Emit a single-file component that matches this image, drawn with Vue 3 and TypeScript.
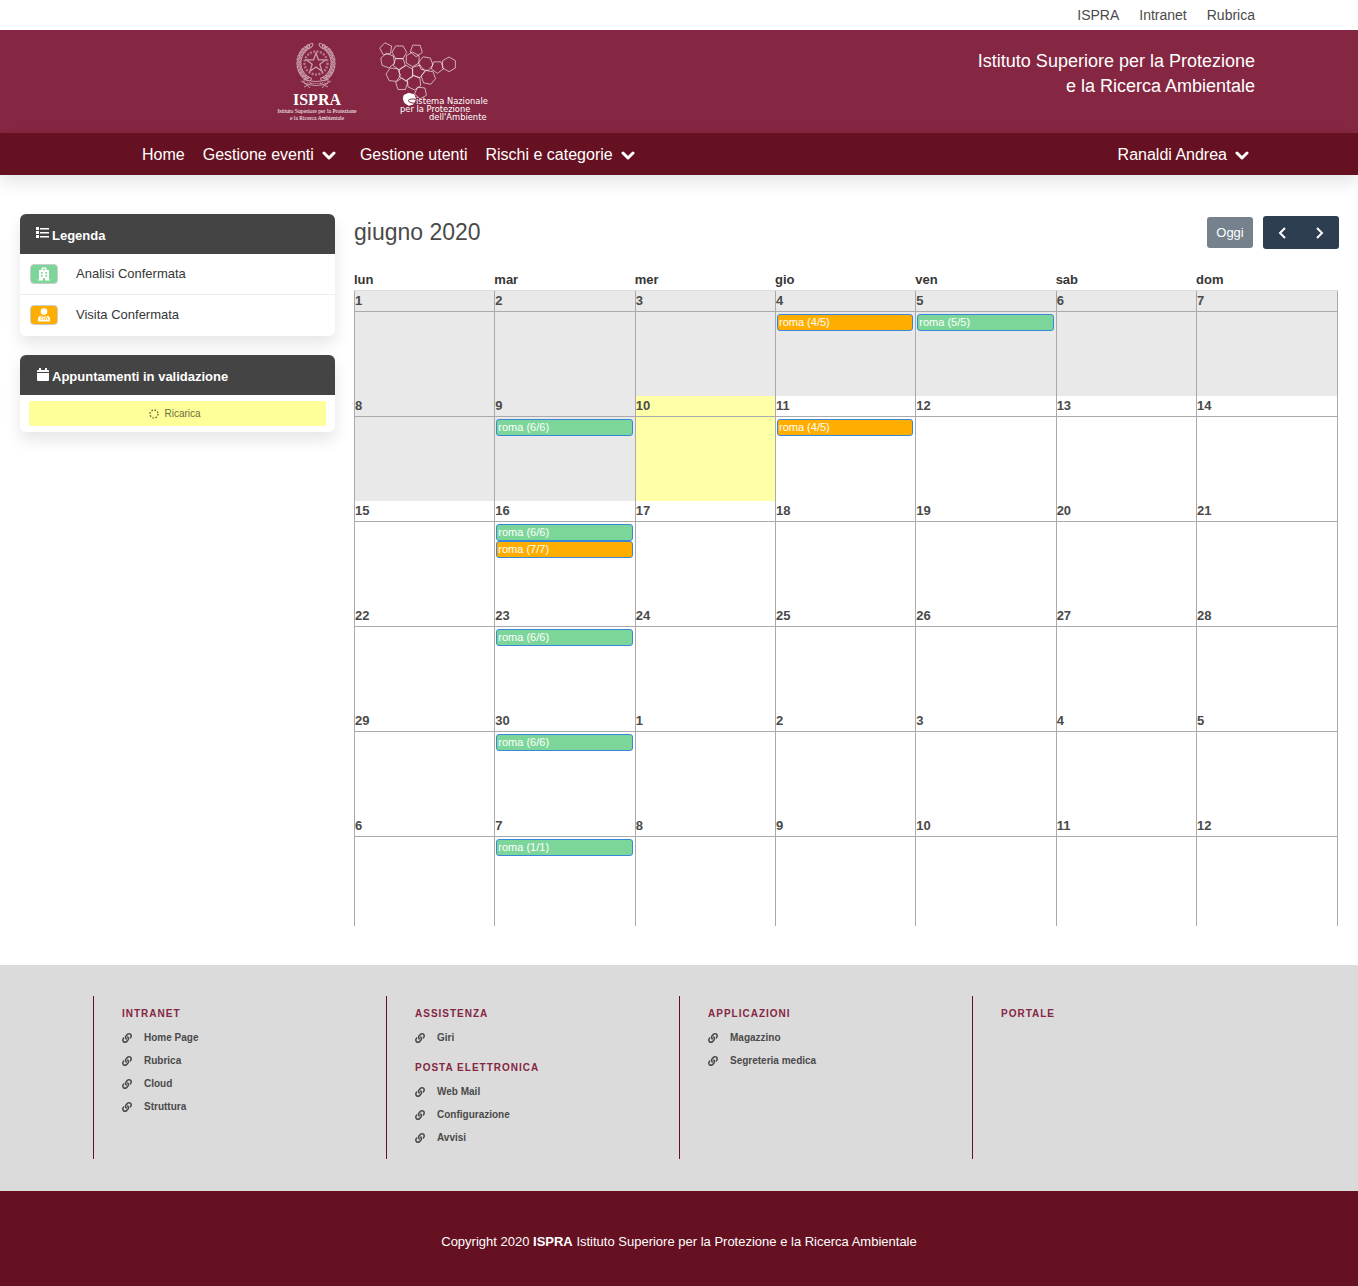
<script setup lang="ts">
interface Evento { label: string; kind: 'analisi' | 'visita' }
interface Giorno { num: number; stato: string; eventi: Evento[] }
interface Menu { titolo: string; voci: string[] }

const giorniSettimana = ['lun', 'mar', 'mer', 'gio', 'ven', 'sab', 'dom']

const eventi: Record<number, Evento[]> = {
  3: [{ label: 'roma (4/5)', kind: 'visita' }],
  4: [{ label: 'roma (5/5)', kind: 'analisi' }],
  8: [{ label: 'roma (6/6)', kind: 'analisi' }],
  10: [{ label: 'roma (4/5)', kind: 'visita' }],
  15: [{ label: 'roma (6/6)', kind: 'analisi' }, { label: 'roma (7/7)', kind: 'visita' }],
  22: [{ label: 'roma (6/6)', kind: 'analisi' }],
  29: [{ label: 'roma (6/6)', kind: 'analisi' }],
  36: [{ label: 'roma (1/1)', kind: 'analisi' }],
}

const settimane: Giorno[][] = Array.from({ length: 6 }, (_, s) =>
  Array.from({ length: 7 }, (_, g) => {
    const i = s * 7 + g
    return {
      num: i < 30 ? i + 1 : i - 29,
      stato: i < 9 ? 'passato' : i === 9 ? 'oggi' : '',
      eventi: eventi[i] ?? [],
    }
  }),
)

const colonne: Menu[][] = [
  [{ titolo: 'Intranet', voci: ['Home Page', 'Rubrica', 'Cloud', 'Struttura'] }],
  [
    { titolo: 'Assistenza', voci: ['Giri'] },
    { titolo: 'Posta elettronica', voci: ['Web Mail', 'Configurazione', 'Avvisi'] },
  ],
  [{ titolo: 'Applicazioni', voci: ['Magazzino', 'Segreteria medica'] }],
  [{ titolo: 'Portale', voci: [] }],
]

function poligono(cx: number, cy: number, r: number, lati: number, gradi: number): string {
  return Array.from({ length: lati }, (_, i) => {
    const a = ((gradi + (360 / lati) * i) * Math.PI) / 180
    return `${(cx + r * Math.cos(a)).toFixed(1)},${(cy + r * Math.sin(a)).toFixed(1)}`
  }).join(' ')
}

// centre x, centre y, radius, sides, rotation
const celle: number[][] = [
  [378, 57, 19, 5, -100], [418, 67, 22, 6, 0], [469, 61, 19, 5, 20], [383, 92, 22, 6, 20],
  [418, 101, 19, 5, 90], [458, 88, 22, 6, 30], [497, 101, 22, 6, 10], [532, 111, 19, 5, 90],
  [567, 103, 22, 6, 30], [400, 134, 22, 6, 5], [438, 129, 23, 6, 30], [474, 124, 20, 5, 0],
  [505, 142, 22, 6, 10], [425, 163, 19, 5, -90], [462, 158, 22, 6, 25], [482, 188, 19, 5, -120],
]
const molecole = celle.map(([x, y, r, n, g]) => poligono(x, y, r, n, g))

const foglie = Array.from({ length: 13 }, (_, i) => {
  const a = ((118 + i * 11) * Math.PI) / 180
  return { x: 20 + 17 * Math.cos(a), y: 22 + 18 * Math.sin(a), g: 118 + i * 11 + 65 }
})
const stella = Array.from({ length: 10 }, (_, i) => {
  const a = ((i * 36 - 90) * Math.PI) / 180
  const r = i % 2 ? 4 : 10
  return `${(20 + r * Math.cos(a)).toFixed(1)},${(22 + r * Math.sin(a)).toFixed(1)}`
}).join(' ')

const catena = 'M326.612 185.391c59.747 59.809 58.927 155.698.36 214.59-.11.12-.24.25-.36.37l-67.2 67.2c-59.27 59.27-155.699 59.262-214.96 0-59.27-59.26-59.27-155.7 0-214.96l37.106-37.106c9.84-9.84 26.786-3.3 27.294 10.606.648 17.722 3.826 35.527 9.69 52.721 1.986 5.822.567 12.262-3.783 16.612l-13.087 13.087c-28.026 28.026-28.905 73.66-1.155 101.96 28.024 28.579 74.086 28.749 102.325.51l67.2-67.19c28.191-28.191 28.073-73.757 0-101.83-3.701-3.694-7.429-6.564-10.341-8.569a16.037 16.037 0 0 1-6.947-12.606c-.396-10.567 3.348-21.456 11.698-29.806l21.054-21.055c5.521-5.521 14.182-6.199 20.584-1.731a152.482 152.482 0 0 1 20.522 17.197zM467.547 44.449c-59.261-59.262-155.69-59.27-214.96 0l-67.2 67.2c-.12.12-.25.25-.36.37-58.566 58.892-59.387 154.781.36 214.59a152.454 152.454 0 0 0 20.521 17.196c6.402 4.468 15.064 3.789 20.584-1.731l21.054-21.055c8.35-8.35 12.094-19.239 11.698-29.806a16.037 16.037 0 0 0-6.947-12.606c-2.912-2.005-6.64-4.875-10.341-8.569-28.073-28.073-28.191-73.639 0-101.83l67.2-67.19c28.239-28.239 74.3-28.069 102.325.51 27.75 28.3 26.872 73.934-1.155 101.96l-13.087 13.087c-4.35 4.35-5.769 10.79-3.783 16.612 5.864 17.194 9.042 34.999 9.69 52.721.509 13.906 17.454 20.446 27.294 10.606l37.106-37.106c59.271-59.259 59.271-155.699.001-214.959z'
</script>

<template>
  <div class="page">
    <nav class="top container">
      <a href="#">ISPRA</a>
      <a href="#">Intranet</a>
      <a href="#">Rubrica</a>
    </nav>

    <header class="hero">
      <div class="container hero-in">
        <div class="logos">
          <svg class="logo-ispra" width="80" height="84" viewBox="0 0 240 252" role="img" aria-label="ISPRA">
            <g transform="translate(57 0) scale(3)" fill="none" stroke="#fff" stroke-width="1" opacity=".55">
              <g v-for="lato in [1, -1]" :key="lato" :transform="lato === 1 ? 'translate(0 0)' : 'translate(40 0) scale(-1 1)'">
                <ellipse v-for="(f, i) in foglie" :key="i" :cx="f.x" :cy="f.y" rx="3.4" ry="1.6" :transform="`rotate(${f.g} ${f.x} ${f.y})`" />
                <path d="M5 40c4 2 6 4 9 7M8 46l8-4" />
              </g>
              <circle cx="20" cy="22" r="11.5" stroke-dasharray="2 1.4" stroke-width="2.4" opacity=".7" />
              <polygon :points="stella" stroke-width="1.3" />
              <path d="M8 38q12 5 24 0v4q-12 5-24 0z" />
              <path d="M11 41q9 3 18 0" stroke-dasharray="1.5 1" />
            </g>
            <text class="l-name" x="120" y="191" text-anchor="middle">ISPRA</text>
            <text class="l-sub" x="120" y="217" text-anchor="middle">Istituto Superiore per la Protezione</text>
            <text class="l-sub" x="120" y="238" text-anchor="middle">e la Ricerca Ambientale</text>
          </svg>
          <svg class="logo-snpa" width="130" height="84" viewBox="0 0 390 252" role="img" aria-label="Sistema Nazionale per la Protezione dell'Ambiente">
            <g transform="translate(-351 -33)">
              <polygon v-for="(p, i) in molecole" :key="i" :points="p" fill="none" stroke="#fff" stroke-width="2.6" opacity=".72" />
              <path d="M432 196l14-6 16 4 5 14-7 14-14 4-12-8-4-12z" fill="#fff" stroke="#fff" stroke-width="3" />
              <path d="M468 208q-18-3-23 3 0 8 23 9" fill="none" stroke="#852642" stroke-width="3" />
            </g>
            <text class="l-snpa" x="117" y="190">istema Nazionale</text>
            <text class="l-snpa" x="69" y="214">per la Protezione</text>
            <text class="l-snpa" x="156" y="238">dell'Ambiente</text>
          </svg>
        </div>
        <p class="hero-text">Istituto Superiore per la Protezione<br />e la Ricerca Ambientale</p>
      </div>
    </header>

    <nav class="bar">
      <div class="container bar-in">
        <a href="#">Home</a>
        <a href="#" class="drop">Gestione eventi<svg width="14" height="9" viewBox="0 0 14 9"><path d="M2 2l5 5 5-5" /></svg></a>
        <a href="#" class="after">Gestione utenti</a>
        <a href="#" class="drop">Rischi e categorie<svg width="14" height="9" viewBox="0 0 14 9"><path d="M2 2l5 5 5-5" /></svg></a>
        <a href="#" class="drop user">Ranaldi Andrea<svg width="14" height="9" viewBox="0 0 14 9"><path d="M2 2l5 5 5-5" /></svg></a>
      </div>
    </nav>

    <main class="main">
      <aside>
        <section class="card">
          <h2>
            <svg width="14" height="13" viewBox="0 0 14 13" fill="#fff"><path d="M0 0h3v3H0zM0 4h3v3H0zM0 8h3v3H0zM4 1h9v1.500H4zM4 5h9v1.500H4zM4 9h9v1.500H4z" /></svg>Legenda
          </h2>
          <ul class="legend">
            <li>
              <span class="tag analisi"><svg width="14" height="14" viewBox="0 0 14 14"><path fill="#fff" fill-rule="evenodd" d="M1 13.500V12.500H2V3.500q0-.5.5-.5H4.500V1q0-.5.5-.5h4q.5 0 .5.500v2h2q.5 0 .5.500v9h1v1H8v-2.500H6v2.500zM4 5v1.700h1.700V5zM8.300 5v1.700H10V5zM4 8v1.700h1.700V8zM8.300 8v1.700H10V8zM6.600 1.200v.8h-.8v.8h.8v.8h.8v-.8h.8V2h-.8v-.8z" /></svg></span>
              Analisi Confermata
            </li>
            <li>
              <span class="tag visita"><svg width="14" height="14" viewBox="0 0 14 14"><circle cx="7" cy="3.600" r="3.300" fill="#fff" /><path fill="#fff" d="M1 13v-2q0-3 3-3.300L7 9l3-1.300q3 .3 3 3.300v2q0 .5-.5.5h-11q-.5 0-.5-.5z" /><g fill="none" stroke="#ffae00" stroke-width=".9"><path d="M4.300 8v2M9.500 8v1.500M8.200 12.200V11q0-1.300 1.300-1.300T10.800 11v1.200M5.800 9.500l1.200 2M3.400 11.200h1.700" /></g></svg></span>
              Visita Confermata
            </li>
          </ul>
        </section>
        <section class="card">
          <h2>
            <svg width="14" height="14" viewBox="0 0 14 14" fill="#fff"><path d="M1 4V3q0-1 1-1h1V0h2v2h4V0h2v2h1q1 0 1 1v1zM1 5h12v7q0 1-1 1H2q-1 0-1-1z" /></svg>Appuntamenti in validazione
          </h2>
          <div class="reload">
            <button type="button"><svg width="10" height="10" viewBox="0 0 10 10"><circle cx="5" cy="5" r="4" fill="none" stroke="#6b6b3c" stroke-width="1.500" stroke-dasharray="1.500 1.640" /></svg>Ricarica</button>
          </div>
        </section>
      </aside>

      <section class="calendar">
        <div class="toolbar">
          <h1>giugno 2020</h1>
          <button type="button" class="today">Oggi</button>
          <div class="group">
            <button type="button" aria-label="Precedente"><svg width="10" height="14" viewBox="0 0 10 14"><path d="M8 2L3 7l5 5" /></svg></button>
            <button type="button" aria-label="Successivo"><svg width="10" height="14" viewBox="0 0 10 14"><path d="M2 2l5 5-5 5" /></svg></button>
          </div>
        </div>
        <table>
          <thead>
            <tr><th v-for="g in giorniSettimana" :key="g" scope="col">{{ g }}</th></tr>
          </thead>
          <tbody>
            <tr v-for="(s, i) in settimane" :key="i">
              <td v-for="g in s" :key="g.num" :class="g.stato">
                <div class="num">{{ g.num }}</div>
                <a v-for="e in g.eventi" :key="e.label" href="#" class="event" :class="e.kind">{{ e.label }}</a>
              </td>
            </tr>
          </tbody>
        </table>
      </section>
    </main>

    <section class="links">
      <div class="links-in">
        <div v-for="(c, i) in colonne" :key="i" class="col">
          <template v-for="m in c" :key="m.titolo">
            <h3>{{ m.titolo }}</h3>
            <ul>
              <li v-for="v in m.voci" :key="v">
                <a href="#"><svg width="10" height="10" viewBox="0 0 512 512"><path :d="catena" fill="currentColor" /></svg>{{ v }}</a>
              </li>
            </ul>
          </template>
        </div>
      </div>
    </section>

    <footer>Copyright 2020 <strong>ISPRA</strong> Istituto Superiore per la Protezione e la Ricerca Ambientale</footer>
  </div>
</template>

<style>
body { margin: 0; background: #fff; }
</style>

<style scoped>
* { box-sizing: border-box; }
.page { font: 13px/20px "Liberation Sans", Arial, sans-serif; color: #4a4a4a; }
a { color: inherit; text-decoration: none; }
h1, h2, h3, p, ul { margin: 0; padding: 0; font-size: inherit; font-weight: inherit; list-style: none; }
button { font-family: inherit; border: 0; padding: 0; cursor: pointer; }
.container { max-width: 1152px; margin: 0 auto; }
.top { display: flex; justify-content: flex-end; gap: 20px; font-size: 14px; line-height: 30px; }
.hero { background: #852642; }
.hero-in { display: flex; justify-content: space-between; height: 103px; }
.logos { display: flex; gap: 20px; padding: 11px 0 0 174px; }
.logos text { fill: #fff; }
.l-name { font: bold 48px "Liberation Serif", serif; }
.l-sub { font: 17px "Liberation Serif", serif; }
.l-snpa { font: 25px "DejaVu Sans", sans-serif; }
.hero-text { padding-top: 19px; font-size: 18px; line-height: 25px; color: #fff; text-align: right; }
.bar { position: relative; background: #661122; color: #fff; box-shadow: 0 8px 16px rgba(10, 10, 10, .1); }
.bar-in { display: flex; align-items: center; height: 42px; padding: 2px 6px 0 39px; gap: 18px; font-size: 16px; }
.drop { display: flex; align-items: center; gap: 8px; }
.after { margin-left: 6px; }
.drop svg path { fill: none; stroke: #fff; stroke-width: 3; stroke-linecap: round; stroke-linejoin: round; }
.user { margin-left: auto; }

.main { display: grid; grid-template-columns: 315fr 984fr; gap: 19px; align-items: start; padding: 39px 20px; }
.card { margin-bottom: 19px; border-radius: 6px; background: #fff; box-shadow: 0 8px 16px rgba(10, 10, 10, .1); }
.card h2 { display: flex; gap: 2px; height: 40px; padding: 12px 16px 0; border-radius: 6px 6px 0 0; background: #444; color: #fff; font-weight: bold; }
.card h2 svg { margin-top: 1px; }
.legend li { display: flex; align-items: center; gap: 18px; height: 41px; padding: 0 10px; color: #363636; border-bottom: 1px solid #ededed; }
.legend li:last-child { border-color: transparent; }
.tag { display: flex; align-items: center; justify-content: center; width: 28px; height: 20px; border: 1px solid #ccc; border-radius: 4px; }
.analisi { background: #7dd699; }
.visita { background: #ffae00; }
.reload { padding: 6px 9px; }
.reload button { display: flex; align-items: center; justify-content: center; gap: 5px; width: 100%; height: 25px; padding-right: 5px; border-radius: 2px; background: #ffff99; color: #6b6b3c; font-size: 10px; }

.toolbar { display: flex; align-items: center; height: 37px; margin-right: -1px; }
.toolbar h1 { flex: 1; padding-bottom: 2px; font-size: 23px; line-height: 28px; }
.toolbar button { color: #fff; font-size: 13px; background: #2c3e50; }
.toolbar .today { width: 46px; height: 31px; margin-right: 10px; border-radius: 3px; opacity: .65; }
.group { display: flex; overflow: hidden; border-radius: 3px; }
.group button { display: grid; place-items: center; width: 38px; height: 33px; }
.group path { fill: none; stroke: #fff; stroke-width: 2; }
.calendar table { width: 100%; margin-top: 19px; table-layout: fixed; border-collapse: separate; border-spacing: 0; }
th { height: 21px; padding: 0; color: #363636; text-align: left; line-height: 20px; border-bottom: 1px solid #ddd; }
th:last-child { width: 142px; }
td { height: 105px; padding: 0; vertical-align: top; border-left: 1px solid #aaa; }
td:last-child { border-right: 1px solid #aaa; }
tr:last-child td { height: 110px; }
.num { height: 21px; margin-bottom: 2px; font-weight: bold; border-bottom: 1px solid #aaa; }
.passato { background: #e9e9e9; }
.oggi { background: #ffffa8; }
.event { display: block; height: 17px; margin: 0 2px 0 1px; padding-left: 1px; border: 1px solid #3788d8; border-radius: 3px; color: #fff; font-size: 11px; line-height: 15px; }

.links { padding: 31px 0 32px; background: #dbdbdb; }
.links-in { display: grid; grid-template-columns: repeat(4, 1fr); max-width: 1172px; margin: 0 auto; }
.col { padding: 8px 28px 10px; border-left: 1px solid #661122; font-size: 10px; font-weight: bold; }
.col h3 { color: #852642; letter-spacing: 1px; text-transform: uppercase; line-height: 20px; margin-bottom: 2px; }
.col ul { margin-bottom: 9px; }
.col ul:last-child { margin-bottom: 0; }
.col a { display: flex; align-items: center; gap: 12px; line-height: 23px; }
footer { padding: 41px 20px 34px; background: #661122; color: #fff; text-align: center; }
</style>
